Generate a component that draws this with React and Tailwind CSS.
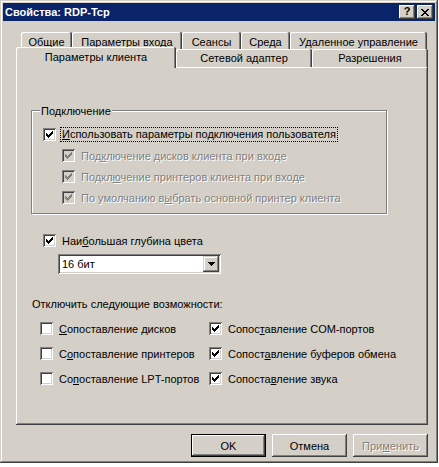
import React from 'react';

const raised =
  'shadow-[inset_-1px_-1px_0_#404040,inset_1px_1px_0_#fff,inset_-2px_-2px_0_#808080,inset_2px_2px_0_#d4d0c8]';
const sunken =
  'shadow-[inset_1px_1px_0_#808080,inset_-1px_-1px_0_#fff,inset_2px_2px_0_#404040,inset_-2px_-2px_0_#d4d0c8]';
const tabEdge = 'shadow-[inset_-1px_0_0_#404040,inset_1px_1px_0_#fff,inset_-2px_0_0_#808080]';
const grey = 'text-[#808080] [text-shadow:1px_1px_0_#fff]';

const Check = ({ checked, disabled }) => (
  <span
    className={`w-[13px] h-[13px] shrink-0 flex items-center justify-center ${sunken} ${
      disabled ? 'bg-[#d4d0c8]' : 'bg-white'
    }`}
  >
    {checked && (
      <svg width="7" height="7" viewBox="0 0 7 7" shapeRendering="crispEdges" fill={disabled ? '#808080' : '#000'}>
        <path d="M6 0h1v1h-1z M5 1h2v1h-2z M0 2h1v1h-1z M4 2h3v1h-3z M0 3h2v1h-2z M3 3h3v1h-3z M0 4h5v1h-5z M1 5h3v1h-3z M2 6h1v1h-1z" />
      </svg>
    )}
  </span>
);

// label split as [before, underlined letter, after]
const Label = ({ parts, className = '' }) => (
  <span className={`whitespace-nowrap ${className}`}>
    {parts[0]}
    <u>{parts[1]}</u>
    {parts[2]}
  </span>
);

const backTabs = [
  ['Общие', 51],
  ['Параметры входа', 110],
  ['Сеансы', 59],
  ['Среда', 49],
  ['Удаленное управление', 137],
];

const options = [
  [false, ['', 'С', 'опоставление дисков']],
  [true, ['Сопос', 'т', 'авление COM-портов']],
  [false, ['С', 'о', 'поставление принтеров']],
  [true, ['Сопост', 'а', 'вление буферов обмена']],
  [false, ['Со', 'п', 'оставление LPT-портов']],
  [true, ['Сопоста', 'в', 'ление звука']],
];

const subRows = [
  ['Под', 'к', 'лючение дисков клиента при входе'],
  ['Подкл', 'ю', 'чение принтеров клиента при входе'],
  ['По умолчанию в', 'ы', 'брать основной принтер клиента'],
];

export default function App() {
  return (
    <div className="w-[439px] h-[467px] bg-white font-['Liberation_Sans',sans-serif] text-[11px] leading-[14px] text-black overflow-hidden">
      <div
        className={`w-[438px] h-[463px] bg-[#d4d0c8] p-[3px] flex flex-col shadow-[inset_-1px_-1px_0_#404040,inset_1px_1px_0_#d4d0c8,inset_-2px_-2px_0_#808080,inset_2px_2px_0_#fff]`}
      >
        {/* title bar */}
        <div className="h-[18px] bg-[#0a246a] flex items-center justify-between pl-[2px] pr-[2px]">
          <span className="text-white font-bold">Свойства: RDP-Tcp</span>
          <div className="flex gap-[2px]">
            <button className={`w-[16px] h-[14px] bg-[#d4d0c8] ${raised} flex items-center justify-center font-bold text-[11px] leading-none pb-[1px]`}>
              ?
            </button>
            <button className={`w-[16px] h-[14px] bg-[#d4d0c8] ${raised} flex items-center justify-center`}>
              <svg width="8" height="7" viewBox="0 0 8 7" shapeRendering="crispEdges" fill="#000">
                <path d="M0 0h2v1h-2z M6 0h2v1h-2z M1 1h2v1h-2z M5 1h2v1h-2z M2 2h4v1h-4z M3 3h2v1h-2z M2 4h4v1h-4z M1 5h2v1h-2z M5 5h2v1h-2z M0 6h2v1h-2z M6 6h2v1h-2z" />
              </svg>
            </button>
          </div>
        </div>

        <div className="flex flex-col pl-[13px] pt-[11px]">
          {/* back tab row */}
          <div className="flex h-[17px] pl-[5px]">
            {backTabs.map(([t, w]) => (
              <div
                key={t}
                style={{ width: w }}
                className={`h-[17px] rounded-t-[2px] bg-[#d4d0c8] ${tabEdge} text-center pt-[3px] whitespace-nowrap`}
              >
                {t}
              </div>
            ))}
          </div>

          {/* front tab row */}
          <div className="flex items-end h-[21px] -mt-[2px] -mb-[1px]">
            <div className={`relative z-10 w-[160px] h-[21px] rounded-t-[2px] bg-[#d4d0c8] shadow-[inset_-1px_0_0_#404040,inset_1px_1px_0_#fff,inset_-2px_0_0_#808080] text-center pt-[3px]`}>
              Параметры клиента
            </div>
            <div className={`w-[136px] h-[19px] rounded-t-[2px] bg-[#d4d0c8] ${tabEdge} text-center pt-[2px]`}>
              Сетевой адаптер
            </div>
            <div className={`w-[116px] h-[19px] rounded-t-[2px] bg-[#d4d0c8] ${tabEdge} text-center pt-[2px]`}>
              Разрешения
            </div>
          </div>

          {/* panel */}
          <div className="w-[412px] h-[358px] bg-[#d4d0c8] shadow-[inset_-1px_-1px_0_#404040,inset_1px_1px_0_#fff,inset_-2px_-2px_0_#808080] flex flex-col">
            {/* group box */}
            <div className="mt-[43px] ml-[15px] w-[356px] h-[104px] border border-[#808080] shadow-[1px_1px_0_#fff,inset_1px_1px_0_#fff] flex flex-col">
              <span className="-mt-[7px] ml-[8px] self-start px-[1px] bg-[#d4d0c8]">Подключение</span>
              <div className="mt-[8px] pl-[11px] h-[17px] flex items-center">
                <Check checked />
                <span className="ml-[4px] border border-dotted border-black px-[1px] leading-[13px]">
                  <Label parts={['', 'И', 'спользовать параметры подключения пользователя']} />
                </span>
              </div>
              {subRows.map((p) => (
                <div key={p[2]} className="mt-[4px] pl-[30px] h-[17px] flex items-center">
                  <Check checked disabled />
                  <Label parts={p} className={`ml-[6px] ${grey}`} />
                </div>
              ))}
            </div>

            {/* colour depth */}
            <div className="mt-[18px] ml-[27px] h-[17px] flex items-center">
              <Check checked />
              <Label parts={['Наи', 'б', 'ольшая глубина цвета']} className="ml-[6px]" />
            </div>
            <div className={`mt-[5px] ml-[42px] w-[163px] h-[20px] bg-white ${sunken} p-[2px] flex items-center`}>
              <span className="flex-1 pl-[2px]">16 бит</span>
              <span className={`w-[16px] h-[16px] bg-[#d4d0c8] shadow-[inset_-1px_-1px_0_#404040,inset_1px_1px_0_#d4d0c8,inset_-2px_-2px_0_#808080,inset_2px_2px_0_#fff] flex items-center justify-center`}>
                <svg width="7" height="4" viewBox="0 0 7 4" shapeRendering="crispEdges" fill="#000">
                  <path d="M0 0h7v1H0z M1 1h5v1H1z M2 2h3v1H2z M3 3h1v1H3z" />
                </svg>
              </span>
            </div>

            <div className="mt-[23px] ml-[16px]">Отключить следующие возможности:</div>

            <div className="mt-[9px] ml-[24px] grid grid-cols-[169px_auto] gap-y-[8px]">
              {options.map(([c, p]) => (
                <div key={p.join('')} className="h-[17px] flex items-center">
                  <Check checked={c} />
                  <Label parts={p} className="ml-[6px]" />
                </div>
              ))}
            </div>
          </div>

          {/* buttons */}
          <div className="w-[412px] mt-[9px] flex justify-end gap-[6px]">
            <button className={`w-[75px] h-[23px] bg-[#d4d0c8] border border-black shadow-[inset_-1px_-1px_0_#404040,inset_1px_1px_0_#fff,inset_-2px_-2px_0_#808080]`}>
              OK
            </button>
            <button className={`w-[75px] h-[23px] bg-[#d4d0c8] ${raised}`}>Отмена</button>
            <button className={`w-[75px] h-[23px] bg-[#d4d0c8] ${raised}`}>
              <Label parts={['При', 'м', 'енить']} className={grey} />
            </button>
          </div>
        </div>
      </div>
    </div>
  );
}
